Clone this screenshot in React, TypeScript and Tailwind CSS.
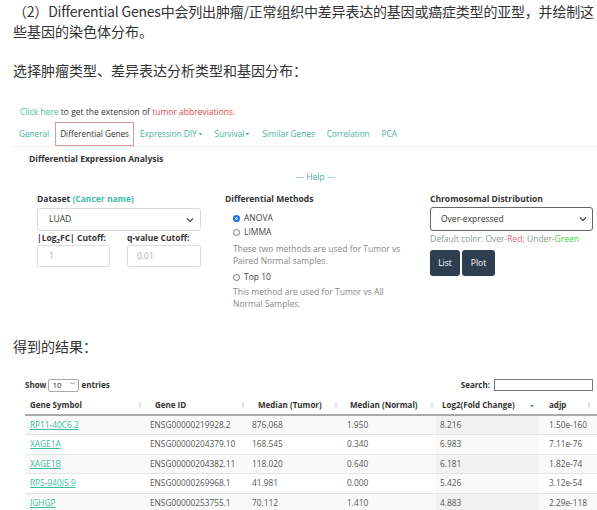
import React from 'react'

const rows = [
  { sym: 'RP11-40C6.2', id: 'ENSG00000219928.2', tumor: '876.068', normal: '1.950', fc: '8.216', adjp: '1.50e-160' },
  { sym: 'XAGE1A', id: 'ENSG00000204379.10', tumor: '168.545', normal: '0.340', fc: '6.983', adjp: '7.11e-76' },
  { sym: 'XAGE1B', id: 'ENSG00000204382.11', tumor: '118.020', normal: '0.640', fc: '6.181', adjp: '1.82e-74' },
  { sym: 'RP5-940J5.9', id: 'ENSG00000269968.1', tumor: '41.981', normal: '0.000', fc: '5.426', adjp: '3.12e-54' },
  { sym: 'IGHGP', id: 'ENSG00000253755.1', tumor: '70.112', normal: '1.410', fc: '4.883', adjp: '2.29e-118' },
]

const tabs = ['General', 'Differential Genes', 'Expression DIY', 'Survival', 'Similar Genes', 'Correlation', 'PCA']

const SortIcon = ({ active }: { active?: boolean }) =>
  active ? (
    <svg width="6" height="8" viewBox="0 0 6 8">
      <path d="M1 4 L5 4 L3 6.5 Z" fill="#5b7fd0" />
    </svg>
  ) : (
    <svg width="6" height="8" viewBox="0 0 6 8">
      <path d="M1.2 3.4 L4.8 3.4 L3 1 Z" fill="#d6d6d6" />
      <path d="M1.2 4.6 L4.8 4.6 L3 7 Z" fill="#d6d6d6" />
    </svg>
  )

const Chevron = () => (
  <svg width="8" height="6" viewBox="0 0 8 6">
    <path d="M1 1.5 L4 4.5 L7 1.5" fill="none" stroke="#444" strokeWidth="1.2" />
  </svg>
)

const Caret = () => (
  <svg width="5" height="4" viewBox="0 0 5 4" className="ml-[1px]">
    <path d="M0.5 1 L4.5 1 L2.5 3.2 Z" fill="#45b39d" />
  </svg>
)

const Radio = ({ on }: { on?: boolean }) => (
  <span
    className={
      on
        ? 'inline-block h-[7px] w-[7px] rounded-full border-[2px] border-[#1a73e8] bg-[#1a73e8] shadow-[inset_0_0_0_1px_#fff]'
        : 'inline-block h-[7px] w-[7px] rounded-full border border-[#777] bg-white'
    }
  />
)

const cols = 'grid grid-cols-[122px_100px_95px_94px_103px_1fr]'

export default function App() {
  return (
    <div className="w-[597px] h-[510px] overflow-hidden bg-white text-[#333]" style={{ fontFamily: '"Open Sans", "Noto Sans CJK SC", sans-serif' }}>
      <div className="pl-[13px] pt-[1px] text-[14px] leading-[20px] text-[#333] whitespace-nowrap" style={{ fontFamily: '"Noto Sans CJK SC", sans-serif' }}>
        <div className="tracking-[-0.2px]">（2）Differential Genes中会列出肿瘤/正常组织中差异表达的基因或癌症类型的亚型，并绘制这</div>
        <div>些基因的染色体分布。</div>
        <div className="mt-[19px]">选择肿瘤类型、差异表达分析类型和基因分布：</div>
      </div>

      <div className="mt-[26px] pl-[20px] text-[8.5px] leading-[12px]">
        <span className="text-[#3fbf9f]">Click here</span> to get the extension of <span className="text-[#e0474c]">tumor abbreviations.</span>
      </div>

      <div className="ml-[13px] mt-[5px] flex items-end border-b border-[#eee] h-[24px] text-[8.2px]">
        {tabs.map((t, i) => (
          <div
            key={t}
            className={
              i === 1
                ? 'h-[24px] px-[4px] flex items-center border border-[#d99a9a] text-[#333]'
                : 'h-[24px] px-[6px] flex items-center text-[#45b39d]'
            }
          >
            {t}
            {(t === 'Expression DIY' || t === 'Survival') && <Caret />}
          </div>
        ))}
      </div>

      <div className="pl-[29px] mt-[6px] text-[8.5px] font-bold leading-[12px]">Differential Expression Analysis</div>
      <div className="mt-[6px] text-center pl-[34px] text-[8.5px] leading-[12px] text-[#45b39d]">--- Help ---</div>

      <div className="mt-[10px] pl-[37px] flex gap-[24px] text-[8.5px]">
        <div className="w-[164px]">
          <div className="font-bold leading-[12px]">
            Dataset <span className="text-[#3cc0a0]">(Cancer name)</span>
          </div>
          <div className="mt-[3px] h-[23px] border border-[#d9d9d9] rounded-[3px] flex items-center justify-between pl-[11px] pr-[6px]">
            <span>LUAD</span>
            <Chevron />
          </div>
          <div className="mt-[1px] flex gap-[17px] font-bold leading-[12px]">
            <div className="w-[73px]">
              |Log<sub className="text-[6px]">2</sub>FC| Cutoff:
            </div>
            <div>q-value Cutoff:</div>
          </div>
          <div className="mt-[1px] flex gap-[17px]">
            <div className="w-[73px] h-[22px] border border-[#ddd] rounded-[2px] flex items-center pl-[11px] text-[#aaa]">1</div>
            <div className="w-[74px] h-[22px] border border-[#ddd] rounded-[2px] flex items-center pl-[9px] text-[#aaa]">0.01</div>
          </div>
        </div>

        <div className="w-[181px]">
          <div className="font-bold leading-[12px]">Differential Methods</div>
          <div className="pl-[8px] mt-[6px] text-[#444]">
            <div className="flex items-center gap-[4px] h-[14px]">
              <Radio on /> ANOVA
            </div>
            <div className="flex items-center gap-[4px] h-[14px]">
              <Radio /> LIMMA
            </div>
            <div className="text-[#888] leading-[12px] mt-[4px]">
              These two methods are used for Tumor vs
              <br />
              Paired Normal samples.
            </div>
            <div className="flex items-center gap-[4px] h-[14px] mt-[3px]">
              <Radio /> Top 10
            </div>
            <div className="text-[#888] leading-[12px] mt-[2px]">
              This method are used for Tumor vs All
              <br />
              Normal Samples.
            </div>
          </div>
        </div>

        <div className="w-[163px]">
          <div className="font-bold leading-[12px]">Chromosomal Distribution</div>
          <div className="mt-[2px] h-[24px] border border-[#666] rounded-[3px] flex items-center justify-between pl-[10px] pr-[5px]">
            <span>Over-expressed</span>
            <Chevron />
          </div>
          <div className="mt-[2px] leading-[12px] text-[#8a9a98]">
            Default color: Over-<span className="text-[#e86a6a]">Red</span>; Under-<span className="text-[#3fcf3f]">Green</span>
          </div>
          <div className="mt-[5px] flex gap-[2px]">
            <div className="h-[26px] w-[30px] rounded-[3px] bg-[#2c3e50] text-white flex items-center justify-center">List</div>
            <div className="h-[26px] w-[33px] rounded-[3px] bg-[#2c3e50] text-white flex items-center justify-center">Plot</div>
          </div>
        </div>
      </div>

      <div className="mt-[26px] pl-[13px] text-[14px] leading-[20px]" style={{ fontFamily: '"Noto Sans CJK SC", sans-serif' }}>
        得到的结果：
      </div>

      <div className="ml-[25px] mt-[22px] text-[8px]">
        <div className="flex items-center justify-between h-[14px] font-bold">
          <div className="flex items-center gap-[2px]">
            Show
            <span className="h-[13px] w-[31px] border border-[#aaa] rounded-[2px] flex items-center justify-between px-[3px] font-normal">
              10 <span className="text-[6px] text-[#666]">﹀</span>
            </span>
            entries
          </div>
          <div className="flex items-center gap-[4px] pr-[4px]">
            Search:
            <span className="h-[12px] w-[99px] border border-[#777]" />
          </div>
        </div>

        <div className={`${cols} h-[21px] items-center font-bold border-b-[2px] border-[#aaa] mt-[3px]`}>
          <div className="pl-[5px] pr-[4px] flex justify-between items-center">Gene Symbol <SortIcon /></div>
          <div className="pl-[8px] pr-[1px] flex justify-between items-center">Gene ID <SortIcon /></div>
          <div className="pl-[11px] pr-[3px] flex justify-between items-center">Median (Tumor) <SortIcon /></div>
          <div className="pl-[8px] pr-[1px] flex justify-between items-center">Median (Normal) <SortIcon /></div>
          <div className="pl-[6px] pr-[4px] flex justify-between items-center">Log2(Fold Change) <SortIcon active /></div>
          <div className="pl-[10px] pr-[5px] flex justify-between items-center">adjp <SortIcon /></div>
        </div>

        {rows.map((r, i) => (
          <div key={r.id} className={`${cols} h-[19.4px] items-center border-b border-[#e4e4e4] text-[8.3px] text-[#555] ${i % 2 === 0 ? 'bg-[#f9f9f9]' : 'bg-white'}`}>
            <div className="pl-[5px] text-[#3cbf9e] underline">{r.sym}</div>
            <div className="pl-[3px]">{r.id}</div>
            <div className="pl-[5px]">{r.tumor}</div>
            <div className="pl-[5px]">{r.normal}</div>
            <div className={`pl-[4px] h-full flex items-center ${i % 2 === 0 ? 'bg-[#f1f1f1]' : 'bg-[#fafafa]'}`}>{r.fc}</div>
            <div className="pl-[10px]">{r.adjp}</div>
          </div>
        ))}
      </div>
    </div>
  )
}
